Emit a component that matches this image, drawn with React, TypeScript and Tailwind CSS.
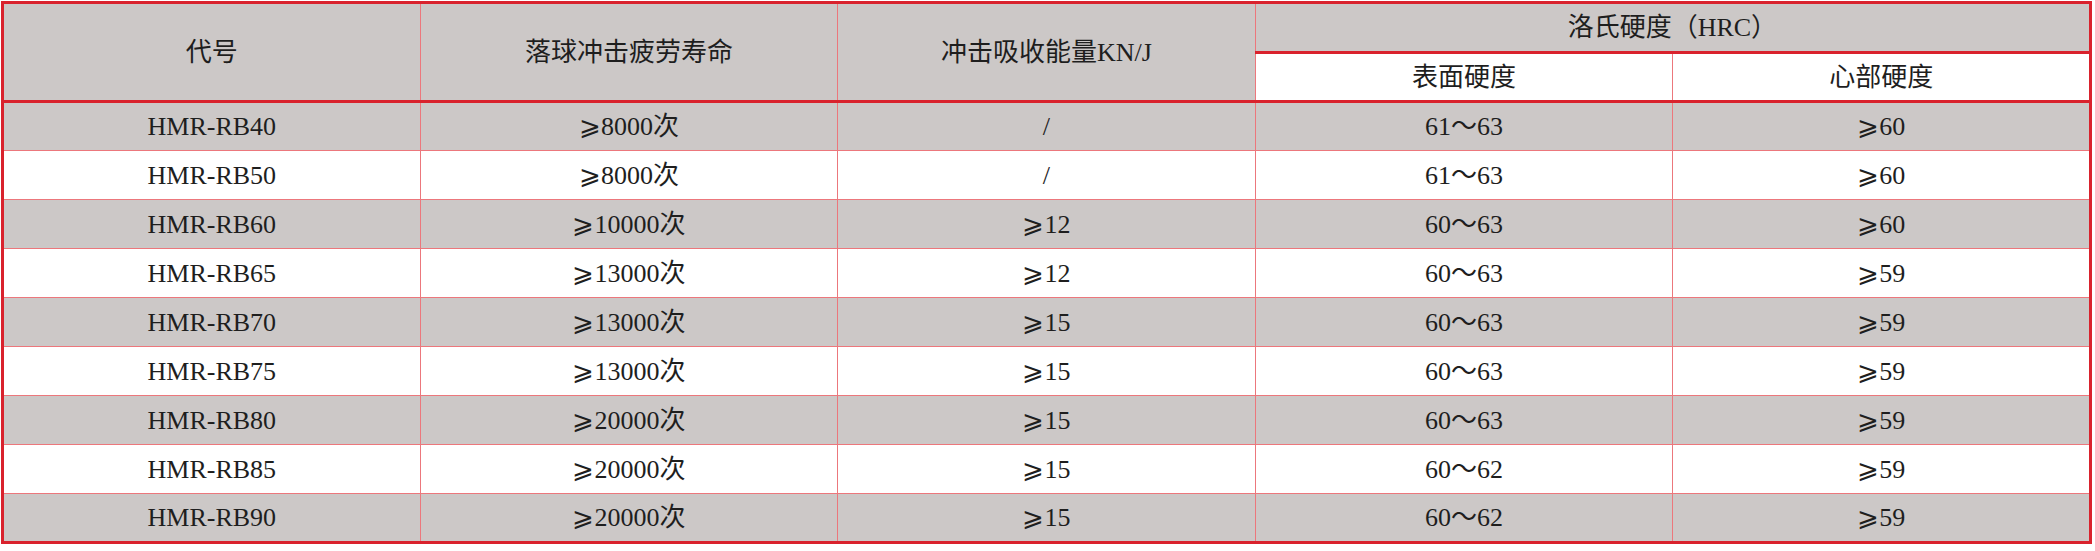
import React from 'react';

const rows = [
  ['HMR-RB40', '⩾8000次', '/', '61～63', '⩾60'],
  ['HMR-RB50', '⩾8000次', '/', '61～63', '⩾60'],
  ['HMR-RB60', '⩾10000次', '⩾12', '60～63', '⩾60'],
  ['HMR-RB65', '⩾13000次', '⩾12', '60～63', '⩾59'],
  ['HMR-RB70', '⩾13000次', '⩾15', '60～63', '⩾59'],
  ['HMR-RB75', '⩾13000次', '⩾15', '60～63', '⩾59'],
  ['HMR-RB80', '⩾20000次', '⩾15', '60～63', '⩾59'],
  ['HMR-RB85', '⩾20000次', '⩾15', '60～62', '⩾59'],
  ['HMR-RB90', '⩾20000次', '⩾15', '60～62', '⩾59'],
];

const thin = 'border border-[#ec777c]';
const head = 'border border-[#ec777c] border-b-[3px] border-b-[#d9222d] font-normal';

export default function App() {
  return (
    <div className="bg-white w-[2095px] h-[551px] p-px">
      <table
        className="w-[2091px] table-fixed border-collapse border-[3px] border-[#d9222d] text-[#1e1e1e] text-[26px] text-center"
        style={{ fontFamily: '"Liberation Serif", "Noto Sans CJK SC", serif' }}
      >
        <thead>
          <tr className="h-[50px] bg-[#ccc8c7]">
            <th rowSpan={2} className={head}>代号</th>
            <th rowSpan={2} className={head}>落球冲击疲劳寿命</th>
            <th rowSpan={2} className={head}>冲击吸收能量KN/J</th>
            <th colSpan={2} className={head}>洛氏硬度（HRC）</th>
          </tr>
          <tr className="h-[49px] bg-white">
            <th className={head}>表面硬度</th>
            <th className={head}>心部硬度</th>
          </tr>
        </thead>
        <tbody>
          {rows.map((r, i) => (
            <tr key={r[0]} className={`h-[49px] ${i % 2 === 0 ? 'bg-[#ccc8c7]' : 'bg-white'}`}>
              {r.map((c, j) => (
                <td key={j} className={thin}>{c}</td>
              ))}
            </tr>
          ))}
        </tbody>
      </table>
    </div>
  );
}
